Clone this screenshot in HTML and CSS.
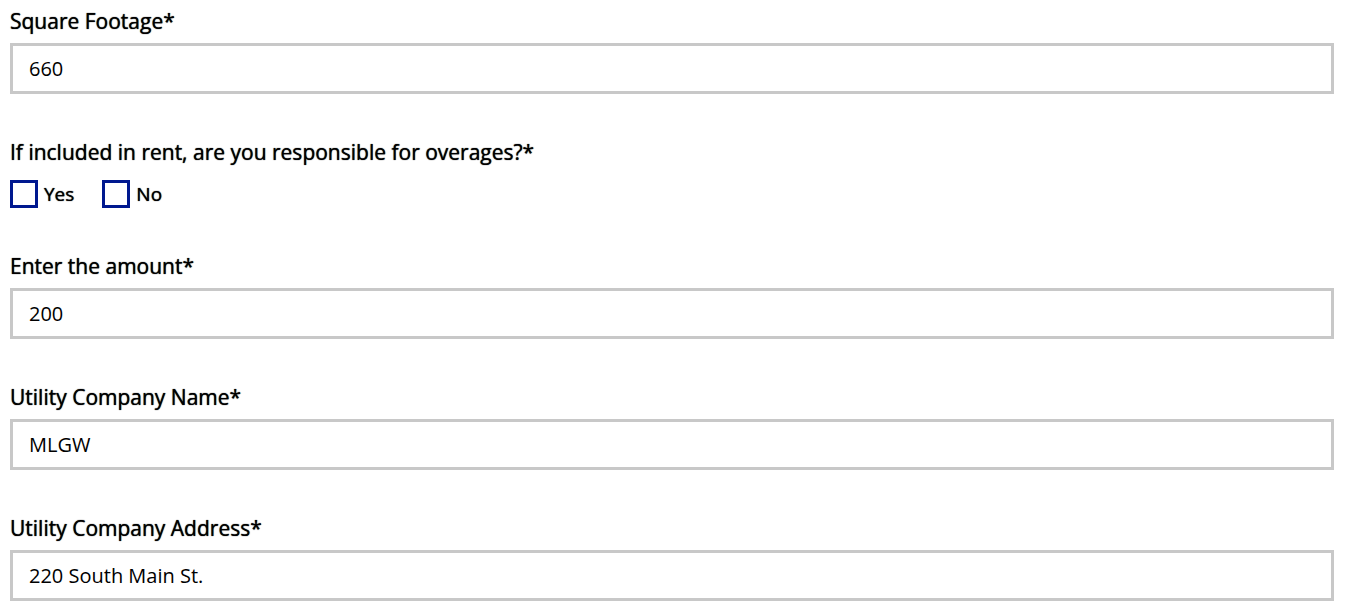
FILE: index.html
```html
<!DOCTYPE html>
<html lang="en">
<head>
<meta charset="utf-8">
<title>Utility information</title>
<link rel="stylesheet" href="styles.css">
</head>
<body>
<form class="form">
  <div class="field">
    <label class="label" for="footage">Square Footage*</label>
    <input class="input" id="footage" type="text" value="660">
  </div>
  <fieldset class="field choices">
    <legend class="label">If included in rent, are you responsible for overages?*</legend>
    <div class="options">
      <label class="option"><input class="check" type="checkbox" name="overages" value="yes">Yes</label>
      <label class="option"><input class="check" type="checkbox" name="overages" value="no">No</label>
    </div>
  </fieldset>
  <div class="field">
    <label class="label" for="amount">Enter the amount*</label>
    <input class="input" id="amount" type="text" value="200">
  </div>
  <div class="field">
    <label class="label" for="company">Utility Company Name*</label>
    <input class="input" id="company" type="text" value="MLGW">
  </div>
  <div class="field">
    <label class="label" for="address">Utility Company Address*</label>
    <input class="input" id="address" type="text" value="220 South Main St.">
  </div>
</form>
</body>
</html>
```
FILE: styles.css
```css
* {
  box-sizing: border-box;
}

body {
  margin: 0;
  background: #fff;
  color: #000;
  font-family: "Open Sans", "Noto Sans", sans-serif;
}

.form {
  display: flex;
  flex-direction: column;
  gap: 41px;
  padding: 4px 14px 14px 10px;
}

.field {
  min-width: 0;
  margin: 0;
  padding: 0;
  border: 0;
}

.label {
  display: block;
  padding: 0;
  margin-bottom: 5px;
  font-size: 21px;
  line-height: 34px;
  text-shadow: 0 0 1px #000;
}

.input {
  display: block;
  width: 100%;
  height: 51px;
  padding: 0 16px;
  border: 3px solid #c8c8c8;
  border-radius: 0;
  background: #fff;
  color: #000;
  font-family: inherit;
  font-size: 20px;
}

.options {
  display: flex;
  gap: 28px;
  padding-top: 6px;
}

.option {
  display: flex;
  align-items: center;
  gap: 6px;
  font-size: 19px;
  line-height: 28px;
  text-shadow: 0 0 1px #000;
}

.check {
  appearance: none;
  width: 28px;
  height: 28px;
  margin: 0;
  border: 3px solid #00188f;
  background: #fff;
}
```
